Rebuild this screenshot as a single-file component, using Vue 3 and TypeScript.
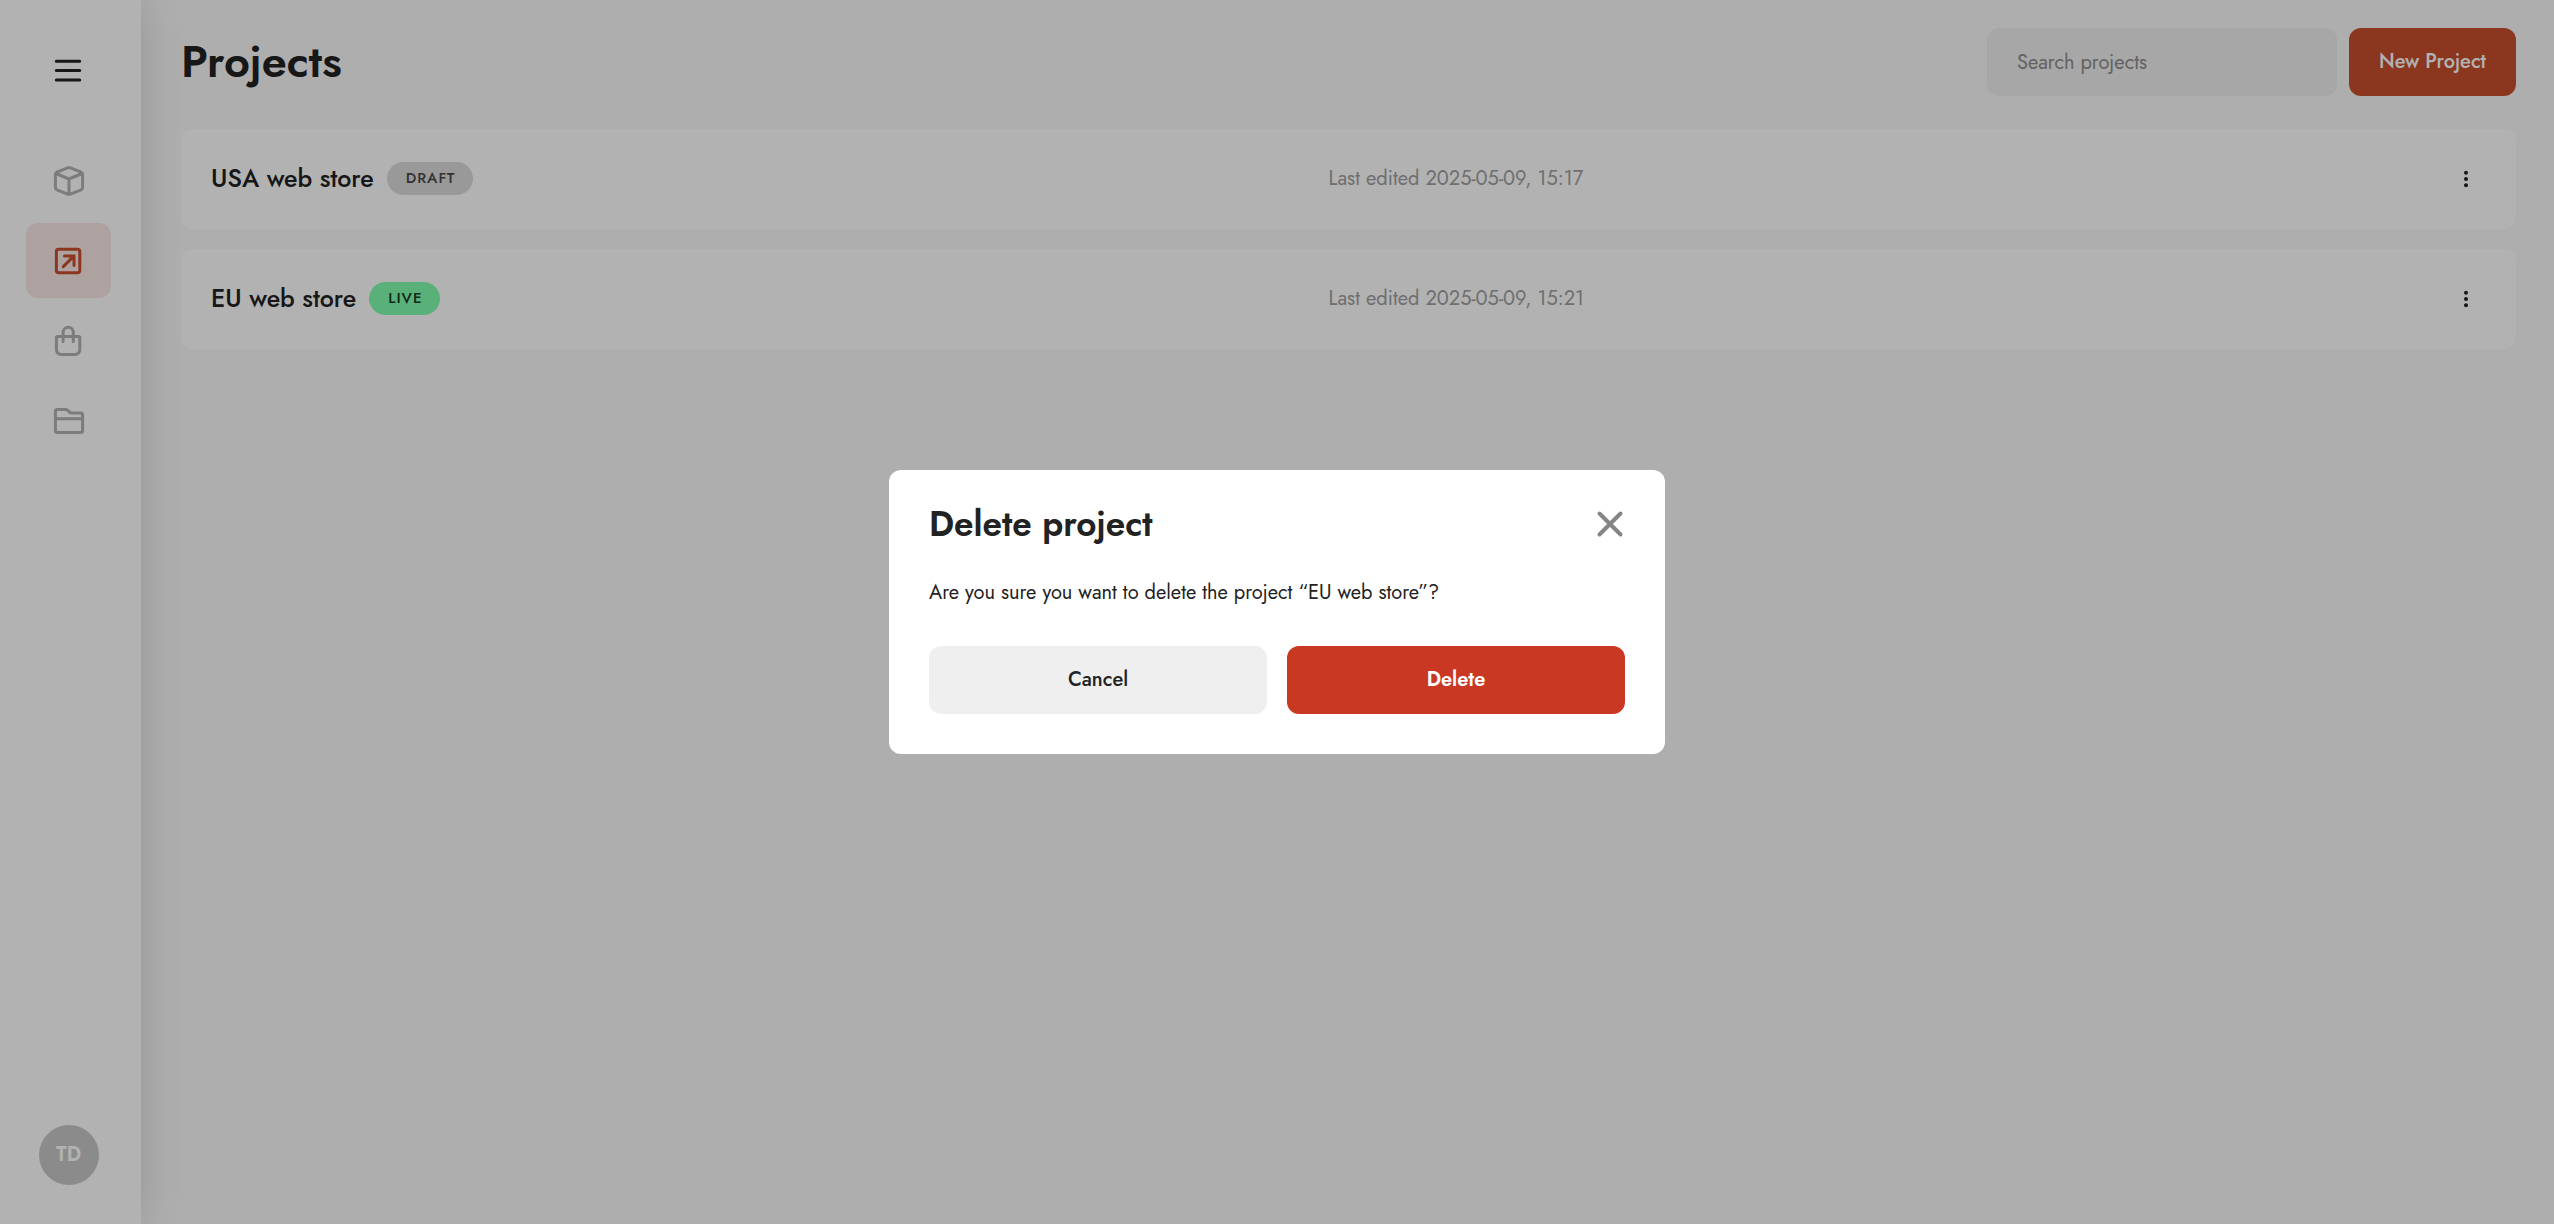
<script setup lang="ts">
import { ref } from 'vue'

interface Project {
  id: number
  name: string
  status: 'Draft' | 'Live'
  edited: string
}

const projects = ref<Project[]>([
  { id: 1, name: 'USA web store', status: 'Draft', edited: '2025-05-09, 15:17' },
  { id: 2, name: 'EU web store', status: 'Live', edited: '2025-05-09, 15:21' },
])

const query = ref('')
const pending = ref<Project | null>(projects.value[1])

function remove() {
  projects.value = projects.value.filter((p) => p.id !== pending.value?.id)
  pending.value = null
}
</script>

<template>
  <div class="app">
    <aside class="sidebar">
      <button class="menu" type="button" aria-label="Menu">
        <svg width="37" height="37" viewBox="0 0 37 37"><path d="M6.3 9.2H29.700M6.300 18.600H29.700M6.300 28H29.700" /></svg>
      </button>
      <nav class="nav">
        <a href="#products" class="item" aria-label="Products">
          <svg width="37" height="37" viewBox="0 0 37 37">
            <path d="M5.400 12.400V25.600Q5.400 27.300 6.900 27.900L17.600 32.200Q19 32.700 20.400 32.200L31.100 27.900Q32.600 27.300 32.600 25.600V12.400Q32.600 10.700 31.100 10.100L20.400 5.800Q19 5.300 17.600 5.800L6.900 10.100Q5.400 10.700 5.400 12.400ZM6 11.500L19 17L32 11.500M19 17V32.300" />
          </svg>
        </a>
        <a href="#projects" class="item active" aria-label="Projects" aria-current="page">
          <svg width="37" height="37" viewBox="0 0 37 37">
            <rect x="6.400" y="7.200" width="23.400" height="23.600" rx="2.200" />
            <path d="M14.400 13.900H24V23.500M24 13.900L13.300 24.600" />
          </svg>
        </a>
        <a href="#orders" class="item" aria-label="Orders">
          <svg width="37" height="37" viewBox="0 0 37 37">
            <path d="M7.500 14.400H28.700Q29.800 14.400 29.800 15.500V27.300Q29.800 32.500 24.600 32.500H11.600Q6.400 32.500 6.400 27.300V15.500Q6.400 14.400 7.500 14.400ZM13.100 19.600V10.300A5.100 5.100 0 0 1 23.300 10.300V19.600" />
          </svg>
        </a>
        <a href="#files" class="item" aria-label="Files">
          <svg width="37" height="37" viewBox="0 0 37 37">
            <path d="M7.400 7.400H15.600Q16.700 7.400 17.500 8.200L19.500 10.100Q20.400 11 21.500 11H30.600Q32.600 11 32.600 13V28.600Q32.600 30.600 30.600 30.600H7.400Q5.400 30.600 5.400 28.600V9.400Q5.400 7.400 7.400 7.400ZM5.400 16.700H32.600" />
          </svg>
        </a>
      </nav>
      <button class="avatar" type="button" aria-label="Account">TD</button>
    </aside>

    <main class="main">
      <header class="header">
        <h1>Projects</h1>
        <input v-model="query" class="search" type="text" placeholder="Search projects" aria-label="Search projects" />
        <button class="btn new" type="button">New Project</button>
      </header>
      <ul class="list">
        <li v-for="p in projects" :key="p.id" class="row">
          <div class="name">
            <span>{{ p.name }}</span>
            <span class="badge" :class="p.status.toLowerCase()">{{ p.status }}</span>
          </div>
          <div class="edited">Last edited {{ p.edited }}</div>
          <button class="more" type="button" aria-label="Project actions" @click="pending = p">
            <svg width="40" height="40" viewBox="0 0 40 40">
              <circle cx="20" cy="13.700" r="2" /><circle cx="20" cy="20" r="2" /><circle cx="20" cy="26.300" r="2" />
            </svg>
          </button>
        </li>
      </ul>
    </main>

    <div v-if="pending" class="overlay">
      <section class="dialog" role="dialog" aria-modal="true" aria-labelledby="dialog-title">
        <div class="dialog-head">
          <h2 id="dialog-title">Delete project</h2>
          <button class="close" type="button" aria-label="Close" @click="pending = null">
            <svg width="30" height="30" viewBox="0 0 30 30"><path d="M4.500 4.500L25.500 25.500M25.500 4.500L4.500 25.500" stroke-width="4" /></svg>
          </button>
        </div>
        <p>Are you sure you want to delete the project “{{ pending.name }}”?</p>
        <div class="actions">
          <button class="btn cancel" type="button" @click="pending = null">Cancel</button>
          <button class="btn delete" type="button" @click="remove">Delete</button>
        </div>
      </section>
    </div>
  </div>
</template>

<style>
body {
  margin: 0;
  background: #f9f9f9;
}
</style>

<style scoped>
* {
  box-sizing: border-box;
}
.app {
  display: flex;
  min-height: 100vh;
  background: #f9f9f9;
  color: #222;
  font: 400 20px/30px Jost, Lato, sans-serif;
}
button,
input {
  border: 0;
  padding: 0;
  background: none;
  color: inherit;
  font: inherit;
}
h1,
h2,
p {
  margin: 0;
}
svg {
  display: block;
  fill: none;
  stroke: currentColor;
  stroke-linecap: round;
  stroke-linejoin: round;
}
.sidebar {
  display: flex;
  flex-direction: column;
  align-items: center;
  flex: none;
  width: 141px;
  padding: 33px 30px 39px 26px;
  background: #fff;
  box-shadow: 0 0 40px rgba(0, 0, 0, 0.14);
}
.sidebar svg {
  stroke-width: 3;
}
.menu,
.item {
  display: flex;
  align-items: center;
  justify-content: center;
  width: 85px;
  height: 75px;
  border-radius: 12px;
}
.nav {
  display: flex;
  flex-direction: column;
  gap: 5px;
  margin-top: 35px;
}
.item {
  color: #b2b2b2;
}
.item.active {
  background: #fae9e6;
  color: #c8502d;
}
.avatar {
  width: 60px;
  height: 60px;
  margin-top: auto;
  border-radius: 50%;
  background: #c8c8c8;
  color: #fff;
  font-weight: 600;
}
.main {
  flex: 1;
  min-width: 0;
  padding: 28px 38px 28px 40px;
}
.header {
  display: flex;
  align-items: center;
  gap: 12px;
  margin-bottom: 33px;
}
h1 {
  margin-right: auto;
  font-size: 45px;
  line-height: 68px;
  font-weight: 600;
}
.search {
  width: 350px;
  height: 68px;
  padding: 0 30px;
  border-radius: 12px;
  background: #efefef;
}
.search::placeholder {
  color: #8d8d8d;
  opacity: 1;
}
.btn {
  height: 68px;
  border-radius: 12px;
  font-weight: 500;
}
.new {
  padding: 0 30px;
  background: #c8502d;
  color: #fff;
}
.list {
  display: flex;
  flex-direction: column;
  gap: 20px;
  margin: 0;
  padding: 0;
  list-style: none;
}
.row {
  display: grid;
  grid-template-columns: 1fr 1fr 40px;
  align-items: center;
  height: 100px;
  padding: 0 30px;
  border-radius: 12px;
  background: #fff;
}
.name {
  display: flex;
  gap: 13px;
  height: 34px;
  font-size: 25px;
  line-height: 32px;
  font-weight: 500;
}
.badge {
  height: 33px;
  padding: 0 18px 0 19px;
  border-radius: 17px;
  font-size: 15px;
  line-height: 33px;
  letter-spacing: 1px;
  text-transform: uppercase;
}
.draft {
  background: #dcdcdc;
  color: #484848;
}
.live {
  background: #80feae;
  color: #123a20;
}
.edited {
  color: #a0a0a0;
}
.more svg {
  fill: #222;
  stroke: none;
}
.overlay {
  position: fixed;
  inset: 0;
  display: flex;
  align-items: center;
  justify-content: center;
  background: rgba(0, 0, 0, 0.3);
}
.dialog {
  width: 776px;
  max-width: 100%;
  padding: 30px 40px 40px;
  border-radius: 12px;
  background: #fff;
}
.dialog-head {
  display: flex;
  align-items: center;
  justify-content: space-between;
}
h2 {
  font-size: 35px;
  line-height: 48px;
  font-weight: 600;
}
.close {
  color: #858585;
}
.dialog p {
  margin: 30px 0 38px;
}
.actions {
  display: flex;
  gap: 20px;
}
.actions .btn {
  flex: 1;
}
.cancel {
  background: #efefef;
}
.actions .delete {
  background: #c93822;
  color: #fff;
  font-weight: 600;
}
</style>
